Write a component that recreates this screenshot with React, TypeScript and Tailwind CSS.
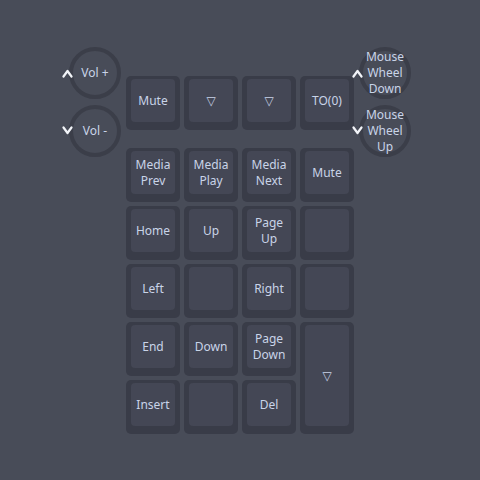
import React from "react";

interface KeyDef {
  label: string[];
  tall?: boolean;
}

// main block, 4 columns; the last column has a 2-row key at the bottom
const topRow: KeyDef[] = [
  { label: ["Mute"] },
  { label: ["▽"] },
  { label: ["▽"] },
  { label: ["TO(0)"] },
];

const mainKeys: KeyDef[] = [
  { label: ["Media", "Prev"] },
  { label: ["Media", "Play"] },
  { label: ["Media", "Next"] },
  { label: ["Mute"] },
  { label: ["Home"] },
  { label: ["Up"] },
  { label: ["Page", "Up"] },
  { label: [] },
  { label: ["Left"] },
  { label: [] },
  { label: ["Right"] },
  { label: [] },
  { label: ["End"] },
  { label: ["Down"] },
  { label: ["Page", "Down"] },
  { label: ["▽"], tall: true },
  { label: ["Insert"] },
  { label: [] },
  { label: ["Del"] },
];

const Chevron: React.FC<{ up: boolean }> = ({ up }) => (
  <svg width="11" height="10" viewBox="0 0 11 10" className="relative z-10 block shrink-0">
    <path
      d={up ? "M1.5 8.5 L5.5 3 L9.5 8.5" : "M1.5 1.5 L5.5 7 L9.5 1.5"}
      fill="none"
      stroke="#f2f4f8"
      strokeWidth="2.2"
      strokeLinecap="round"
      strokeLinejoin="round"
    />
  </svg>
);

const Key: React.FC<{ k: KeyDef }> = ({ k }) => (
  <div
    className={`rounded-[5px] bg-[#393c48] pt-[3px] pb-[8px] pl-[5px] pr-[5px] ${
      k.tall ? "row-span-2 h-[112px]" : "h-[54px]"
    }`}
  >
    <div className="flex h-full flex-col items-center justify-center rounded-[4px] bg-[#444755] text-[12px] leading-[16px] text-[#c9d4e8]">
      {k.label.map((l, i) => (
        <span key={i}>{l}</span>
      ))}
    </div>
  </div>
);

const Knob: React.FC<{ lines: string[]; up: boolean }> = ({ lines, up }) => (
  <div className="flex h-[52px] items-center">
    <Chevron up={up} />
    <div className="ml-[-4px] flex h-[52px] w-[52px] items-center justify-center rounded-full border-[4px] border-[#3b3e49]">
      <div className="flex flex-col items-center whitespace-nowrap text-[12px] leading-[16px] text-[#c9d4e8]">
        {lines.map((l, i) => (
          <span key={i}>{l}</span>
        ))}
      </div>
    </div>
  </div>
);

const App: React.FC = () => {
  return (
    <div
      className="h-[480px] w-[480px] bg-[#484c58] pt-[47px]"
      style={{ fontFamily: '"Noto Sans", "DejaVu Sans", sans-serif' }}
    >
      <div className="flex justify-center pr-[7px]">
        {/* left knobs */}
        <div className="mr-[5px] flex flex-col gap-[6px]">
          <Knob lines={["Vol +"]} up />
          <Knob lines={["Vol -"]} up={false} />
        </div>

        {/* keys */}
        <div className="mt-[29px] flex w-[228px] flex-col gap-[18px]">
          <div className="grid grid-cols-4 gap-[4px]">
            {topRow.map((k, i) => (
              <Key key={i} k={k} />
            ))}
          </div>
          <div className="grid grid-cols-4 gap-[4px]">
            {mainKeys.map((k, i) => (
              <Key key={i} k={k} />
            ))}
          </div>
        </div>

        {/* right knobs */}
        <div className="ml-[-2px] flex flex-col gap-[6px]">
          <Knob lines={["Mouse", "Wheel", "Down"]} up />
          <Knob lines={["Mouse", "Wheel", "Up"]} up={false} />
        </div>
      </div>
    </div>
  );
};

export default App;
